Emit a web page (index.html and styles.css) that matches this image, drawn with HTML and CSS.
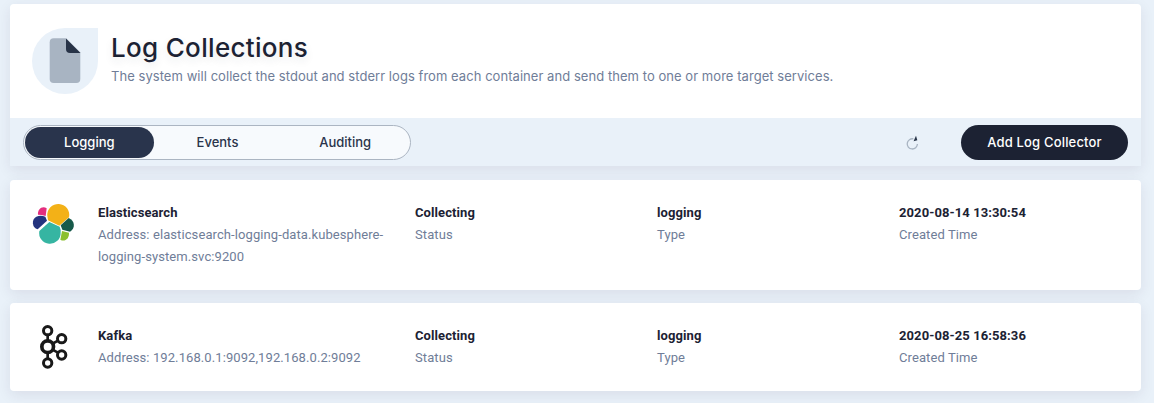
FILE: index.html
```html
<!DOCTYPE html>
<html lang="en">
<head>
<meta charset="utf-8">
<title>Log Collections</title>
<link rel="stylesheet" href="styles.css">
</head>
<body>
<main class="page">
  <section class="panel">
    <header class="banner">
      <div class="banner-icon">
        <svg width="66" height="66" viewBox="0 0 66 66">
          <path d="M21.7 10.2H34L48.3 24.5V51a4 4 0 0 1-4 4H21.7a4 4 0 0 1-4-4V14.2a4 4 0 0 1 4-4Z" fill="#a8b4c2"/>
          <path d="M34 10.5V21a4 4 0 0 0 4 4H48.5Z" fill="#273347"/>
        </svg>
      </div>
      <div class="banner-text">
        <h1 class="title">Log Collections</h1>
        <p class="desc">The system will collect the stdout and stderr logs from each container and send them to one or more target services.</p>
      </div>
    </header>
    <div class="toolbar">
      <nav class="tabs">
        <a class="tab tab-active">Logging</a>
        <a class="tab">Events</a>
        <a class="tab">Auditing</a>
      </nav>
      <div class="actions">
        <svg class="refresh" width="16" height="16" viewBox="0 0 16 16">
          <path d="M9.4 4.9A5.1 5.1 0 1 0 13.4 10" fill="none" stroke="#a8b4c2" stroke-width="1.3"/>
          <path d="M12 1.8L13.3 6.3L9.6 7.2Z" fill="#273347"/>
        </svg>
        <button class="add">Add Log Collector</button>
      </div>
    </div>
  </section>

  <article class="card card-tall">
    <svg class="logo" width="70" height="65" viewBox="0 0 210 195">
      <path d="M84 91L82 78A33 33 0 1 1 147 82L118 107Z" fill="#f3b117"/>
      <path d="M88 96L119 110Q123 118 122 128A32.3 32.3 0 1 1 58 123Z" fill="#36b5a2"/>
      <path d="M49 80Q62 75 76 80L81 92L53 118A21 21 0 0 1 49 80Z" fill="#24337e"/>
      <path d="M54 74C52 58 67 45 80 55L77 78Q65 74 54 74Z" fill="#e42d7e"/>
      <path d="M146 84C165 91 167 116 150 125L127 119L122 106Z" fill="#175a4a"/>
      <path d="M126 123L147 128C148 146 134 157 121 149Z" fill="#8bc02f"/>
    </svg>
    <div class="cell cell-name"><strong>Elasticsearch</strong><p>Address: elasticsearch-logging-data.kubesphere-logging-system.svc:9200</p></div>
    <div class="cell"><strong>Collecting</strong><p>Status</p></div>
    <div class="cell"><strong>logging</strong><p>Type</p></div>
    <div class="cell"><strong>2020-08-14 13:30:54</strong><p>Created Time</p></div>
  </article>

  <article class="card card-short">
    <svg class="logo" width="70" height="65" viewBox="0 0 210 195">
      <g fill="none" stroke="#191919" stroke-width="9">
        <path d="M83 58V81M83 109V132M96 87L114 77M96 103L114 113" stroke-width="8"/>
        <circle cx="83" cy="47" r="12.5"/>
        <circle cx="83" cy="95" r="17.5" stroke-width="11"/>
        <circle cx="83" cy="144" r="12.5"/>
        <circle cx="125" cy="71" r="12.5"/>
        <circle cx="125" cy="120" r="12.5"/>
      </g>
    </svg>
    <div class="cell cell-name"><strong>Kafka</strong><p>Address: 192.168.0.1:9092,192.168.0.2:9092</p></div>
    <div class="cell"><strong>Collecting</strong><p>Status</p></div>
    <div class="cell"><strong>logging</strong><p>Type</p></div>
    <div class="cell"><strong>2020-08-25 16:58:36</strong><p>Created Time</p></div>
  </article>
</main>
</body>
</html>
```
FILE: styles.css
```css
* { box-sizing: border-box; }
body { margin: 0; background: #e9f1f9; font-family: Roboto, sans-serif; }
h1, p { margin: 0; }
svg { display: block; flex: none; }

.page { height: 403px; padding: 4px 13px 0 10px; overflow: hidden; }
.panel { border-radius: 4px 4px 0 0; box-shadow: 0 4px 14px rgba(60, 35, 70, .09); margin-bottom: 14px; font-family: Inter, sans-serif; }
.banner { display: flex; height: 114px; padding: 24px 22px; background: #fff; border-radius: 4px 4px 0 0; }
.banner-icon { width: 66px; height: 66px; background: #e9f1f9; border-radius: 33px 0 33px 33px; }
.banner-text { padding-left: 13px; }
.title { font-size: 26px; line-height: 40px; font-weight: 500; letter-spacing: .32px; color: #1c2233; text-shadow: 0 4px 8px rgba(36, 46, 66, .1); white-space: nowrap; }
.desc { font-size: 13px; line-height: 17px; letter-spacing: .05px; color: #6f7d98; white-space: nowrap; }

.toolbar { display: flex; align-items: center; justify-content: space-between; height: 48px; padding: 0 13px; background: #e9f1f9; }
.tabs { display: flex; width: 388px; height: 35px; padding: 1px; border: 1px solid #abb5c2; border-radius: 18px; background: #f7fafd; }
.tab { width: 128px; border-radius: 16px; line-height: 31px; text-align: center; font-size: 13px; font-weight: 500; color: #2a344b; }
.tab-active { width: 129px; background: #29344c; color: #fff; }
.actions { display: flex; align-items: center; gap: 41px; }
.add { width: 167px; height: 35px; padding: 0; border: 0; border-radius: 18px; background: #1c2233; color: #fff; font: 500 13px/35px Inter, sans-serif; letter-spacing: .18px; }

.card { display: flex; margin-bottom: 13px; padding: 10px 10px 0; border-radius: 4px; background: #fff; box-shadow: 0 4px 14px rgba(60, 35, 70, .09); }
.card-tall { height: 110px; }
.card-short { height: 88px; }
.card .logo { margin-right: 8px; }
.card-short .logo { margin: 2px 8px 0 0; }
.cell { flex: none; width: 242px; padding-top: 12px; font-size: 13px; line-height: 22px; letter-spacing: .09px; color: #6f7d98; }
.cell strong { display: block; margin-bottom: 1px; font-weight: 700; line-height: 21px; color: #1c2233; }
.cell-name { width: 317px; padding-right: 25px; }
```
